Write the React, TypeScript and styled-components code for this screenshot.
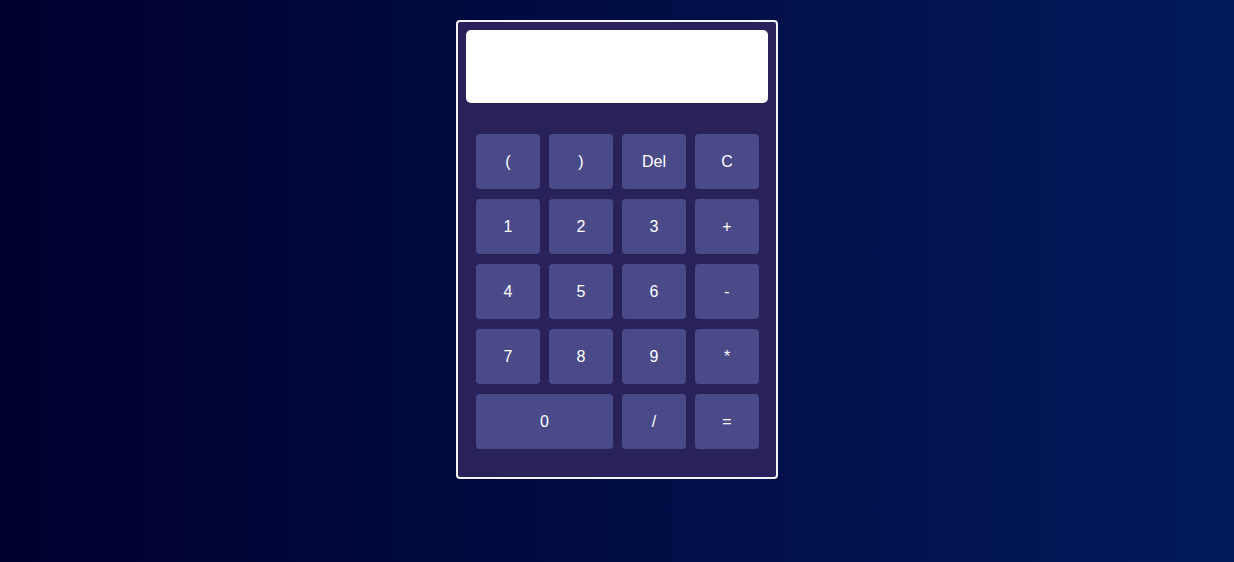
import React, { useState } from 'react';
import styled, { createGlobalStyle } from 'styled-components';

const GlobalStyle = createGlobalStyle`
  html, body {
    margin: 0;
    padding: 0;
    height: 100%;
  }
  body {
    font-family: 'Liberation Sans', Arial, sans-serif;
    background: linear-gradient(to right, #00002e, #021a5b);
  }
  #root {
    min-height: 100%;
  }
`;

const keys = [
  { label: '(' },
  { label: ')' },
  { label: 'Del' },
  { label: 'C' },
  { label: '1' },
  { label: '2' },
  { label: '3' },
  { label: '+' },
  { label: '4' },
  { label: '5' },
  { label: '6' },
  { label: '-' },
  { label: '7' },
  { label: '8' },
  { label: '9' },
  { label: '*' },
  { label: '0', wide: true },
  { label: '/' },
  { label: '=' },
];

function App() {
  const [expr, setExpr] = useState('');

  function handleKey(label: string) {
    if (label === 'C') return setExpr('');
    if (label === 'Del') return setExpr(expr.slice(0, -1));
    if (label === '=') {
      try {
        // eslint-disable-next-line no-new-func
        setExpr(String(Function(`return (${expr})`)()));
      } catch {
        setExpr('Error');
      }
      return;
    }
    setExpr(expr + label);
  }

  return (
    <Page>
      <GlobalStyle />
      <Calculator>
        <Display readOnly value={expr} />
        <Keypad>
          {keys.map((k) => (
            <Key key={k.label} $wide={k.wide} onClick={() => handleKey(k.label)}>
              {k.label}
            </Key>
          ))}
        </Keypad>
      </Calculator>
    </Page>
  );
}

const Page = styled.div`
  display: flex;
  justify-content: center;
  padding-top: 20px;
  min-height: 562px;
  box-sizing: border-box;
`;

const Calculator = styled.div`
  box-sizing: border-box;
  width: 322px;
  height: 459px;
  padding: 8px;
  background-color: #29225a;
  border: 2px solid #f2f2f8;
  border-radius: 4px;
  display: flex;
  flex-direction: column;
`;

const Display = styled.input`
  box-sizing: border-box;
  width: 302px;
  height: 73px;
  border: none;
  border-radius: 5px;
  background-color: #ffffff;
  padding: 0 12px;
  font-family: 'Liberation Sans', Arial, sans-serif;
  font-size: 24px;
  text-align: right;
  outline: none;
`;

const Keypad = styled.div`
  display: grid;
  grid-template-columns: repeat(4, 64px);
  grid-auto-rows: 55px;
  column-gap: 9px;
  row-gap: 10px;
  margin: 31px 10px 0 10px;
`;

const Key = styled.button<{ $wide?: boolean }>`
  grid-column: ${(p) => (p.$wide ? 'span 2' : 'auto')};
  border: none;
  border-radius: 4px;
  background-color: #4b4a89;
  color: #ffffff;
  font-family: 'Liberation Sans', Arial, sans-serif;
  font-size: 16px;
  cursor: pointer;
  padding: 0;
`;

export default App;
